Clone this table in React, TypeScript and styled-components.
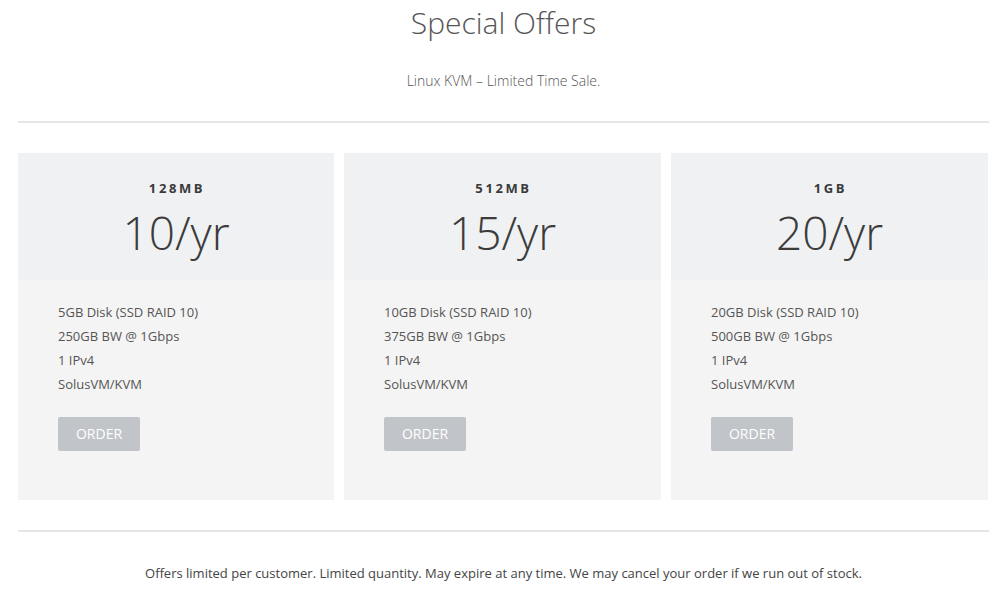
import React from "react";
import styled, { createGlobalStyle } from "styled-components";

const Global = createGlobalStyle`
  html, body { margin: 0; padding: 0; background: #fff; }
  body { font-family: "Open Sans", "Liberation Sans", sans-serif; color: #555; }
`;

const Page = styled.div`
  width: 971px;
  margin: 0 auto;
`;

const Title = styled.h1`
  margin: 0;
  padding-top: 4px;
  text-align: center;
  font-weight: 300;
  font-size: 30px;
  line-height: 38px;
  color: #555;
`;

const Subtitle = styled.p`
  margin: 30px 0 0;
  text-align: center;
  font-size: 14px;
  font-weight: 300;
  line-height: 18px;
  color: #555;
`;

const Rule = styled.hr`
  margin: 0;
  border: 0;
  height: 2px;
  background: #e6e6e6;
`;

const TopRule = styled(Rule)`
  margin-top: 31px;
`;

const Cards = styled.div`
  display: grid;
  grid-template-columns: 316px 317px 317px;
  column-gap: 10px;
  margin-top: 30px;
  margin-bottom: 30px;
`;

const Card = styled.div`
  display: flex;
  flex-direction: column;
  background: #f4f4f4;
  height: 347px;
`;

const CardHead = styled.div`
  background: #f0f1f3;
  height: 127px;
  display: flex;
  flex-direction: column;
  align-items: center;
  padding-top: 26px;
  box-sizing: border-box;
`;

const Plan = styled.div`
  font-size: 13px;
  font-weight: 700;
  letter-spacing: 2.6px;
  color: #3a3a3a;
  line-height: 18px;
  padding-left: 2px;
`;

const Price = styled.div`
  font-size: 46px;
  font-weight: 300;
  color: #3c3c3c;
  line-height: 50px;
  margin-top: 10px;
`;

const CardBody = styled.div`
  padding: 20px 40px 0;
`;

const Feature = styled.div`
  font-size: 13px;
  line-height: 24px;
  color: #555;
`;

const Order = styled.button`
  margin-top: 21px;
  width: 82px;
  height: 34px;
  border: 0;
  border-radius: 2px;
  background: #c1c5c9;
  color: #fff;
  font-family: "Open Sans", "Liberation Sans", sans-serif;
  font-size: 14px;
  font-weight: 400;
  line-height: 32px;
  padding: 0;
  cursor: pointer;
`;

const Footer = styled.p`
  margin: 32px 0 0;
  text-align: center;
  font-size: 13px;
  line-height: 18px;
  color: #444;
`;

const plans = [
  { name: "128MB", price: "10/yr", features: ["5GB Disk (SSD RAID 10)", "250GB BW @ 1Gbps", "1 IPv4", "SolusVM/KVM"] },
  { name: "512MB", price: "15/yr", features: ["10GB Disk (SSD RAID 10)", "375GB BW @ 1Gbps", "1 IPv4", "SolusVM/KVM"] },
  { name: "1GB", price: "20/yr", features: ["20GB Disk (SSD RAID 10)", "500GB BW @ 1Gbps", "1 IPv4", "SolusVM/KVM"] },
];

export default function App() {
  return (
    <Page>
      <Global />
      <Title>Special Offers</Title>
      <Subtitle>Linux KVM – Limited Time Sale.</Subtitle>
      <TopRule />
      <Cards>
        {plans.map((p) => (
          <Card key={p.name}>
            <CardHead>
              <Plan>{p.name}</Plan>
              <Price>{p.price}</Price>
            </CardHead>
            <CardBody>
              {p.features.map((f) => (
                <Feature key={f}>{f}</Feature>
              ))}
              <Order>ORDER</Order>
            </CardBody>
          </Card>
        ))}
      </Cards>
      <Rule />
      <Footer>Offers limited per customer. Limited quantity. May expire at any time. We may cancel your order if we run out of stock.</Footer>
    </Page>
  );
}
